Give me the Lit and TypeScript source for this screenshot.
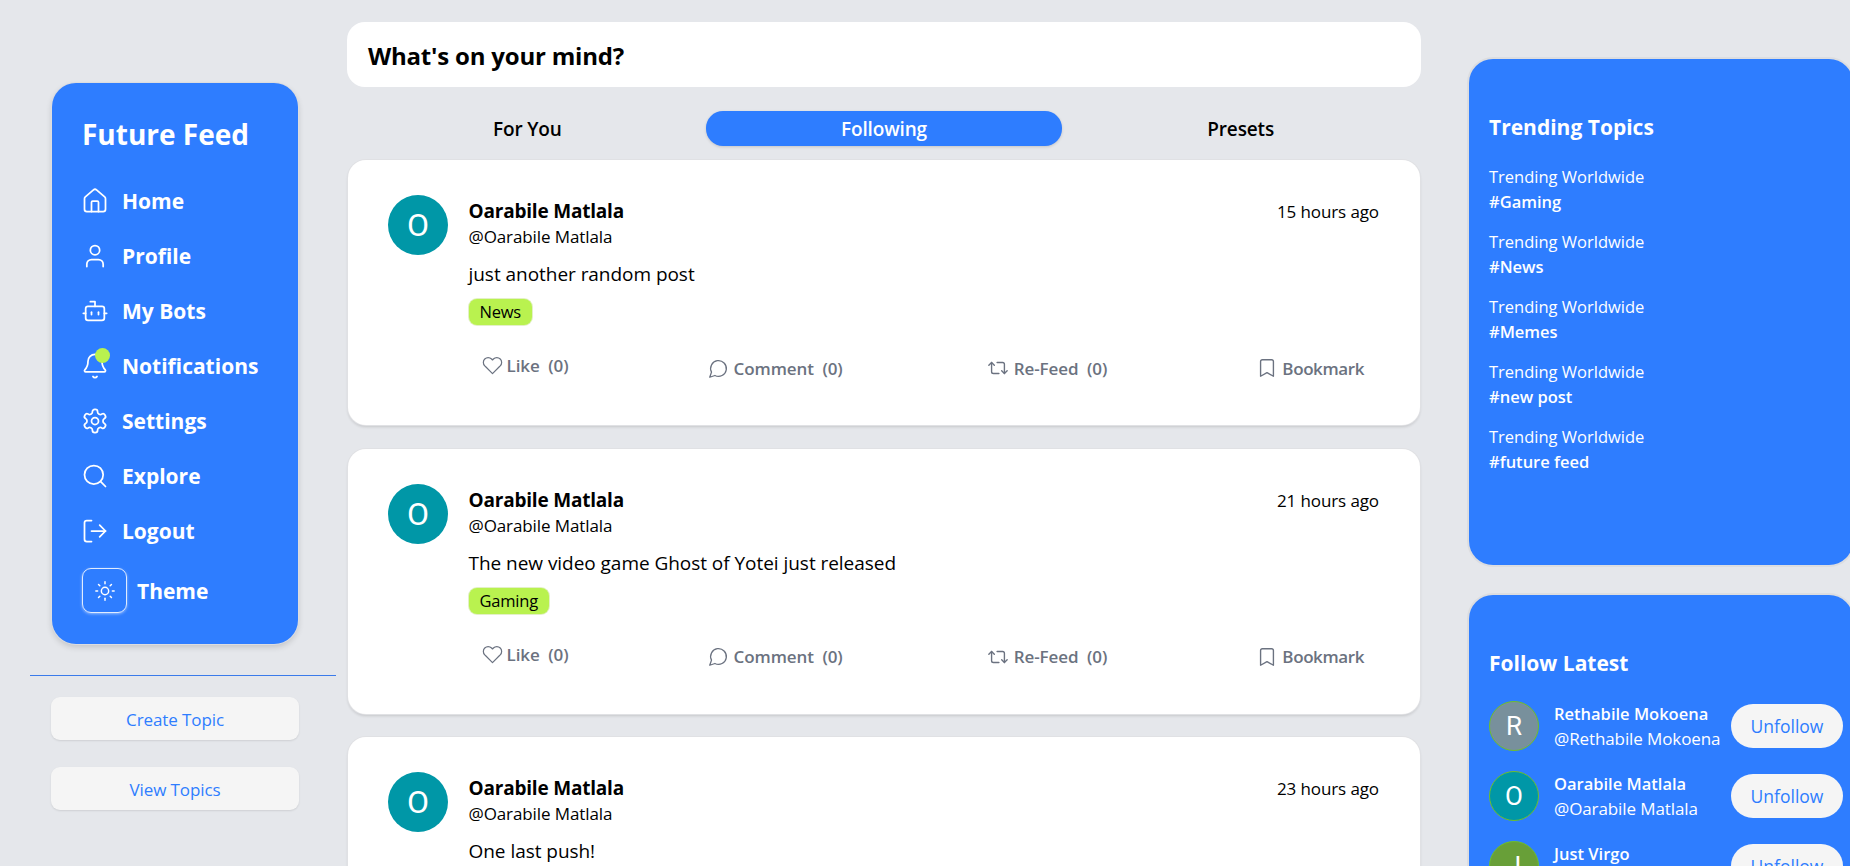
import { LitElement, html, css, svg } from "lit";
import { customElement } from "lit/decorators.js";

const icons: Record<string, unknown> = {
  home: svg`<path d="M15 21v-8a1 1 0 0 0-1-1h-4a1 1 0 0 0-1 1v8"/><path d="M3 10a2 2 0 0 1 .709-1.528l7-6a2 2 0 0 1 2.582 0l7 6A2 2 0 0 1 21 10v9a2 2 0 0 1-2 2H5a2 2 0 0 1-2-2z"/>`,
  user: svg`<path d="M19 21v-2a4 4 0 0 0-4-4H9a4 4 0 0 0-4 4v2"/><circle cx="12" cy="7" r="4"/>`,
  bot: svg`<path d="M12 8V4H8"/><rect width="16" height="12" x="4" y="8" rx="2"/><path d="M2 14h2"/><path d="M20 14h2"/><path d="M15 13v2"/><path d="M9 13v2"/>`,
  bell: svg`<path d="M10.268 21a2 2 0 0 0 3.464 0"/><path d="M3.262 15.326A1 1 0 0 0 4 17h16a1 1 0 0 0 .74-1.673C19.41 13.956 18 12.499 18 8A6 6 0 0 0 6 8c0 4.499-1.411 5.956-2.738 7.326"/>`,
  settings: svg`<path d="M12.22 2h-.44a2 2 0 0 0-2 2v.18a2 2 0 0 1-1 1.73l-.43.25a2 2 0 0 1-2 0l-.15-.08a2 2 0 0 0-2.73.73l-.22.38a2 2 0 0 0 .73 2.73l.15.1a2 2 0 0 1 1 1.72v.51a2 2 0 0 1-1 1.74l-.15.09a2 2 0 0 0-.73 2.73l.22.38a2 2 0 0 0 2.73.73l.15-.08a2 2 0 0 1 2 0l.43.25a2 2 0 0 1 1 1.73V20a2 2 0 0 0 2 2h.44a2 2 0 0 0 2-2v-.18a2 2 0 0 1 1-1.73l.43-.25a2 2 0 0 1 2 0l.15.08a2 2 0 0 0 2.73-.73l.22-.39a2 2 0 0 0-.73-2.73l-.15-.08a2 2 0 0 1-1-1.74v-.5a2 2 0 0 1 1-1.74l.15-.09a2 2 0 0 0 .73-2.73l-.22-.38a2 2 0 0 0-2.73-.73l-.15.08a2 2 0 0 1-2 0l-.43-.25a2 2 0 0 1-1-1.73V4a2 2 0 0 0-2-2z"/><circle cx="12" cy="12" r="3"/>`,
  search: svg`<circle cx="11" cy="11" r="8"/><path d="m21 21-4.3-4.3"/>`,
  logout: svg`<path d="m16 17 5-5-5-5"/><path d="M21 12H9"/><path d="M9 21H5a2 2 0 0 1-2-2V5a2 2 0 0 1 2-2h4"/>`,
  sun: svg`<circle cx="12" cy="12" r="4"/><path d="M12 2v2"/><path d="M12 20v2"/><path d="m4.93 4.93 1.41 1.41"/><path d="m17.66 17.66 1.41 1.41"/><path d="M2 12h2"/><path d="M20 12h2"/><path d="m6.34 17.66-1.41 1.41"/><path d="m19.07 4.93-1.41 1.41"/>`,
  heart: svg`<path d="M20.84 4.61a5.5 5.5 0 0 0-7.78 0L12 5.67l-1.06-1.06a5.5 5.5 0 0 0-7.78 7.78l1.06 1.06L12 21.23l7.78-7.78 1.06-1.06a5.5 5.5 0 0 0 0-7.78z"/>`,
  comment: svg`<path d="M7.9 20A9 9 0 1 0 4 16.1L2 22Z"/>`,
  repost: svg`<path d="m2 9 3-3 3 3"/><path d="M13 18H7a2 2 0 0 1-2-2V6"/><path d="m22 15-3 3-3-3"/><path d="M11 6h6a2 2 0 0 1 2 2v10"/>`,
  bookmark: svg`<path d="m19 21-7-4-7 4V5a2 2 0 0 1 2-2h10a2 2 0 0 1 2 2v16z"/>`,
};

function icon(name: string, size = 24, sw = 1.75) {
  return html`<svg width=${size} height=${size} viewBox="0 0 24 24" fill="none" stroke="currentColor" stroke-width=${sw} stroke-linecap="round" stroke-linejoin="round">${icons[name]}</svg>`;
}

const nav = [
  ["home", "Home"],
  ["user", "Profile"],
  ["bot", "My Bots"],
  ["bell", "Notifications"],
  ["settings", "Settings"],
  ["search", "Explore"],
  ["logout", "Logout"],
];

const posts = [
  { time: "15 hours ago", body: "just another random post", tag: "News" },
  { time: "21 hours ago", body: "The new video game Ghost of Yotei just released", tag: "Gaming" },
  { time: "23 hours ago", body: "One last push!", tag: "News" },
];

const trending = ["#Gaming", "#News", "#Memes", "#new post", "#future feed"];

const people = [
  { name: "Rethabile Mokoena", letter: "R", color: "#78909c" },
  { name: "Oarabile Matlala", letter: "O", color: "#0097a7" },
  { name: "Just Virgo", letter: "J", color: "#689f38" },
];

@customElement("app-root")
export class AppRoot extends LitElement {
  static styles = css`
    :host {
      display: block;
      height: 866px;
      overflow: hidden;
      background: #e5e7eb;
      font-family: "Open Sans", "Noto Sans", sans-serif;
      color: #000;
    }
    .page {
      display: grid;
      grid-template-columns: 347px 1074px 1fr;
      height: 866px;
      overflow: hidden;
    }

    /* left column */
    .left {
      padding: 83px 11px 0 30px;
      display: flex;
      flex-direction: column;
    }
    .sidebar {
      margin: 0 -13px 0 22px;
      width: 246px;
      height: 561px;
      box-sizing: border-box;
      background: #2e7dff;
      border-radius: 24px;
      color: #fff;
      padding: 32px 0 0 29px;
      box-shadow: 0 0 0 1px #dcdde0, 0 3px 6px rgba(0, 0, 0, 0.16);
    }
    .brand {
      padding-left: 1px;
      font-size: 28px;
      font-weight: 700;
      line-height: 38px;
      margin-bottom: 20px;
    }
    .nav-row {
      display: flex;
      align-items: center;
      gap: 13px;
      height: 55px;
      font-size: 21px;
      font-weight: 700;
    }
    .nav-icon {
      position: relative;
      display: flex;
      width: 28px;
      height: 28px;
    }
    .dot {
      position: absolute;
      top: -4px;
      left: 14px;
      width: 15px;
      height: 15px;
      border-radius: 50%;
      background: #b9f24f;
    }
    .theme-row {
      display: flex;
      align-items: center;
      gap: 10px;
      margin-top: 10px;
      padding-left: 1px;
      font-size: 21px;
      font-weight: 700;
    }
    .theme-box {
      width: 45px;
      height: 45px;
      box-sizing: border-box;
      display: flex;
      align-items: center;
      justify-content: center;
      border: 1px solid rgba(255, 255, 255, 0.85);
      border-radius: 9px;
      box-shadow: 0 1px 3px rgba(255, 255, 255, 0.5);
    }
    .divider {
      height: 1px;
      background: #3b7bea;
      margin-top: 31px;
      width: 306px;
    }
    .side-btn {
      margin: 21px 0 0 21px;
      width: 248px;
      height: 43px;
      box-sizing: border-box;
      padding-top: 1px;
      display: flex;
      align-items: center;
      justify-content: center;
      background: #f5f5f5;
      border-radius: 9px;
      color: #2e7dff;
      font-size: 17px;
      font-weight: 500;
      letter-spacing: -0.1px;
      box-shadow: 0 1px 2px rgba(0, 0, 0, 0.1);
    }
    .side-btn + .side-btn {
      margin-top: 27px;
    }

    /* center column */
    .center {
      padding-top: 22px;
      display: flex;
      flex-direction: column;
    }
    .composer {
      height: 65px;
      box-sizing: border-box;
      display: flex;
      align-items: center;
      padding: 1px 0 0 21px;
      background: #fff;
      border-radius: 18px;
      font-size: 24px;
      font-weight: 700;
      letter-spacing: -0.2px;
    }
    .tabs {
      margin-top: 24px;
      display: grid;
      grid-template-columns: 1fr 1fr 1fr;
      height: 35px;
      padding: 0 2px;
      font-size: 19px;
      font-weight: 600;
      letter-spacing: -0.15px;
    }
    .tab {
      display: flex;
      align-items: center;
      justify-content: center;
      padding-top: 1px;
      border-radius: 17px;
    }
    .tab.active {
      background: #2e7dff;
      color: #fff;
      box-shadow: 0 1px 3px rgba(0, 0, 0, 0.15);
    }
    .post {
      margin: 14px 1px 9.5px;
      height: 265px;
      box-sizing: border-box;
      padding: 35px 41px 0 40px;
      display: flex;
      gap: 20.5px;
      background: #fff;
      border-radius: 18px;
      box-shadow: 0 0 0 1px #e0e1e4, 0 2px 3px rgba(0, 0, 0, 0.14);
    }
    .avatar {
      flex: none;
      display: flex;
      align-items: center;
      justify-content: center;
      border-radius: 50%;
      color: #fff;
      font-family: Roboto, sans-serif;
    }
    .post .avatar {
      width: 60px;
      height: 60px;
      background: #0097a7;
      font-size: 32px;
    }
    .post-main {
      flex: 1;
      min-width: 0;
    }
    .post-head {
      display: flex;
      justify-content: space-between;
    }
    .name {
      font-size: 19px;
      font-weight: 700;
      line-height: 28px;
      letter-spacing: -0.2px;
      margin-top: 2px;
    }
    .handle {
      font-size: 17px;
      line-height: 23px;
      letter-spacing: -0.1px;
    }
    .time {
      font-size: 17px;
      letter-spacing: -0.1px;
      line-height: 22px;
      margin-top: 6px;
    }
    .body {
      font-size: 19px;
      line-height: 26px;
      letter-spacing: -0.04px;
      margin-top: 13px;
    }
    .tag {
      display: inline-block;
      margin-top: 12px;
      padding: 0 11px;
      height: 26px;
      line-height: 26px;
      font-size: 16.5px;
      letter-spacing: -0.2px;
      background: #b9f24f;
      border-radius: 8px;
      box-shadow: 0 0 0 1px #e3f0c6;
    }
    .actions {
      display: flex;
      justify-content: space-between;
      align-items: center;
      margin-top: 29px;
      color: #6b7280;
      font-size: 17px;
      font-weight: 600;
      letter-spacing: -0.1px;
    }
    .action {
      display: flex;
      align-items: center;
      gap: 5px;
      padding: 0 15px 0 13px;
      white-space: pre;
    }
    .action.like {
      margin-bottom: 5px;
      gap: 4px;
    }
    .action.mid {
      margin: 0 5px 0 -5px;
    }
    .action.save {
      gap: 4px;
      letter-spacing: -0.4px;
    }

    /* right column */
    .right {
      padding: 59px 0 0 48px;
    }
    .card {
      width: 384px;
      box-sizing: border-box;
      background: #2e7dff;
      color: #fff;
      border-radius: 24px;
      padding: 0 0 0 20px;
      box-shadow: 0 0 0 2px #dcdde0;
    }
    .trending {
      height: 506px;
      padding-top: 50px;
    }
    .card h2 {
      margin: 0;
      font-size: 21px;
      font-weight: 700;
      line-height: 36px;
    }
    .topic {
      margin-top: 15px;
      font-size: 16.5px;
      line-height: 25px;
    }
    .trending h2 + .topic {
      margin-top: 19px;
    }
    .topic b {
      display: block;
      font-weight: 600;
    }
    .follow {
      margin-top: 30px;
      height: 400px;
      padding-top: 50px;
    }
    .follow h2 {
      margin-bottom: 10px;
    }
    .person {
      display: flex;
      align-items: center;
      height: 70px;
    }
    .person .avatar {
      width: 50px;
      height: 50px;
      box-sizing: border-box;
      border: 1px solid #6fbf2a;
      font-size: 26px;
      margin-right: 15px;
    }
    .who {
      width: 177px;
      font-size: 17px;
      line-height: 25px;
      letter-spacing: -0.1px;
      white-space: nowrap;
    }
    .who b {
      display: block;
      font-size: 16.5px;
      font-weight: 600;
      letter-spacing: 0;
    }
    .unfollow {
      width: 112px;
      height: 44px;
      display: flex;
      align-items: center;
      justify-content: center;
      border-radius: 22px;
      background: #f5f5f5;
      color: #2e7dff;
      font-size: 17.5px;
      font-weight: 500;
    }
  `;

  render() {
    return html`
      <div class="page">
        <div class="left">
          <div class="sidebar">
            <div class="brand">Future Feed</div>
            ${nav.map(
              ([ic, label]) => html`<div class="nav-row">
                <span class="nav-icon">${icon(ic, 28, 1.5)}${ic === "bell" ? html`<span class="dot"></span>` : ""}</span>
                <span>${label}</span>
              </div>`
            )}
            <div class="theme-row">
              <span class="theme-box">${icon("sun", 22, 1.6)}</span>
              <span>Theme</span>
            </div>
          </div>
          <div class="divider"></div>
          <div class="side-btn">Create Topic</div>
          <div class="side-btn">View Topics</div>
        </div>

        <div class="center">
          <div class="composer">What's on your mind?</div>
          <div class="tabs">
            <div class="tab">For You</div>
            <div class="tab active">Following</div>
            <div class="tab">Presets</div>
          </div>
          ${posts.map(
            (p) => html`<div class="post">
              <div class="avatar">O</div>
              <div class="post-main">
                <div class="post-head">
                  <div>
                    <div class="name">Oarabile Matlala</div>
                    <div class="handle">@Oarabile Matlala</div>
                  </div>
                  <div class="time">${p.time}</div>
                </div>
                <div class="body">${p.body}</div>
                <span class="tag">${p.tag}</span>
                <div class="actions">
                  <div class="action like">${icon("heart", 21, 1.4)}<span>Like  (0)</span></div>
                  <div class="action mid">${icon("comment", 21, 1.5)}<span>Comment  (0)</span></div>
                  <div class="action mid">${icon("repost", 22, 1.5)}<span>Re-Feed  (0)</span></div>
                  <div class="action save">${icon("bookmark", 22, 1.5)}<span>Bookmark</span></div>
                </div>
              </div>
            </div>`
          )}
        </div>

        <div class="right">
          <div class="card trending">
            <h2>Trending Topics</h2>
            ${trending.map((t) => html`<div class="topic">Trending Worldwide<b>${t}</b></div>`)}
          </div>
          <div class="card follow">
            <h2>Follow Latest</h2>
            ${people.map(
              (p) => html`<div class="person">
                <div class="avatar" style="background:${p.color}">${p.letter}</div>
                <div class="who"><b>${p.name}</b>@${p.name}</div>
                <div class="unfollow">Unfollow</div>
              </div>`
            )}
          </div>
        </div>
      </div>
    `;
  }
}
